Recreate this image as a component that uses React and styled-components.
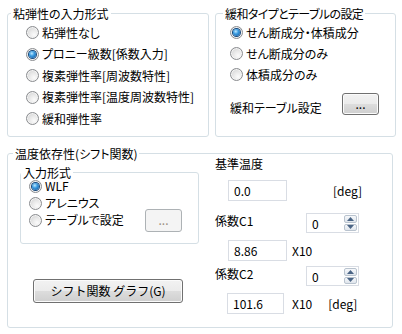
import React from "react";
import styled, { createGlobalStyle } from "styled-components";

const GlobalStyle = createGlobalStyle`
  html, body { margin: 0; padding: 0; background: #fff; }
  body {
    font-family: "Noto Sans CJK JP", "Noto Sans", sans-serif;
    font-size: 12px;
    color: #000;
    font-feature-settings: "palt";
  }
  * { box-sizing: border-box; }
`;

const Page = styled.div`
  width: 402px;
  height: 334px;
  padding: 5px 0 0 7px;
  overflow: hidden;
  background: #fff;
`;

const TopRow = styled.div`
  display: flex;
  gap: 6px;
  align-items: flex-start;
`;

const Group = styled.fieldset`
  margin: ${(p) => p.$mt || 0}px 0 0 0;
  padding: 0;
  min-width: 0;
  width: ${(p) => p.$w}px;
  height: ${(p) => p.$h}px;
  border: 1px solid #d5dfe5;
  border-radius: 3px;
`;

const Legend = styled.legend`
  margin-left: ${(p) => p.$offset}px;
  padding: 0 2px;
  line-height: ${(p) => p.$lh || 17}px;
  font-size: 12px;
  letter-spacing: ${(p) => p.$ls || 0}px;
`;

const RadioList = styled.div`
  display: flex;
  flex-direction: column;
  padding-left: ${(p) => p.$pl}px;
  margin-top: ${(p) => p.$mt || 0}px;
`;

const RadioRow = styled.div`
  display: flex;
  align-items: center;
  gap: 3px;
  height: ${(p) => p.$h}px;
  white-space: nowrap;
`;

const RadioText = styled.span`
  line-height: 14px;
`;

const RadioCircle = styled.span`
  flex: 0 0 13px;
  width: 13px;
  height: 13px;
  border-radius: 50%;
  border: 1px solid #8a8c8f;
  background: radial-gradient(circle at 65% 70%, #fbfbfb 0%, #e8e8e8 45%, #c9cacb 100%);
  box-shadow: inset 0 0 0 1px #f4f4f4;
  display: flex;
  align-items: center;
  justify-content: center;

  &::after {
    content: "";
    display: ${(p) => (p.$on ? "block" : "none")};
    width: 7px;
    height: 7px;
    border-radius: 50%;
    background: radial-gradient(circle at 40% 35%, #bfe9ff 0%, #3a9be0 40%, #0e4f95 100%);
    box-shadow: 0 0 0 1px #16487c;
  }
`;

const Radio = ({ label, on, h, children }) => (
  <RadioRow $h={h}>
    <RadioCircle $on={on} />
    <RadioText>{label}</RadioText>
    {children}
  </RadioRow>
);

const Button = styled.button`
  width: ${(p) => p.$w}px;
  height: ${(p) => p.$h}px;
  margin: 0;
  padding: 0;
  font-family: inherit;
  font-size: 12px;
  line-height: 16px;
  color: #000;
  border: 1px solid #707070;
  border-radius: 3px;
  background: linear-gradient(#f2f2f2 0%, #ebebeb 50%, #dddddd 50%, #cfcfcf 100%);
  box-shadow: inset 0 0 0 1px #fbfbfb;
  flex: 0 0 auto;

  &:disabled {
    border-color: #adb2b5;
    background: #f4f4f4;
    box-shadow: none;
    color: #9a8e80;
  }
`;

const SettingRow = styled.div`
  display: flex;
  align-items: flex-end;
  margin-top: 8px;
  line-height: 16px;
`;

const SettingLabel = styled.span`
  flex: 0 0 112px;
  margin-bottom: -1px;
`;

const BottomBody = styled.div`
  display: flex;
  align-items: flex-start;
`;

const LeftCol = styled.div`
  display: flex;
  flex-direction: column;
  align-items: flex-start;
  padding-left: 12px;
  width: 207px;
`;

const ButtonRowSpacer = styled.div`
  margin-left: auto;
  margin-right: 16px;
`;

const GraphButtonWrap = styled.div`
  margin: 35px 0 0 13px;
`;

const RightCol = styled.div`
  display: flex;
  flex-direction: column;
  margin-top: -6px;
  line-height: 16px;
`;

const Line = styled.div`
  display: flex;
  align-items: ${(p) => p.$align || "center"};
  margin-top: ${(p) => p.$mt || 0}px;
  white-space: nowrap;
`;

const Label = styled.span`
  flex: 0 0 ${(p) => p.$w || "auto"};
`;

const TextBox = styled.div`
  width: ${(p) => p.$w}px;
  height: 21px;
  margin-left: ${(p) => p.$ml || 0}px;
  border: 1px solid #d9dde4;
  padding-left: 5px;
  line-height: 19px;
  background: #fff;
`;

const Unit = styled.span`
  margin-left: ${(p) => p.$ml}px;
`;

const Spin = styled.div`
  width: 53px;
  height: 20px;
  border: 1px solid #d9dde4;
  display: flex;
  align-items: stretch;
  padding: 1px 1px 1px 0;
`;

const SpinValue = styled.span`
  flex: 1;
  padding-left: 5px;
  line-height: 17px;
`;

const SpinButtons = styled.div`
  width: 13px;
  display: flex;
  flex-direction: column;
  gap: 1px;
`;

const SpinBtn = styled.div`
  flex: 1;
  border: 1px solid #b9c3ce;
  border-radius: 2px;
  background: linear-gradient(#f6f8fb, #dfe5ec);
  display: flex;
  align-items: center;
  justify-content: center;
`;

const Arrow = ({ up }) => (
  <svg width="7" height="4" viewBox="0 0 7 4">
    <polygon points={up ? "0,4 7,4 3.5,0" : "0,0 7,0 3.5,4"} fill="#4a6485" />
  </svg>
);

const Spinner = ({ value }) => (
  <Spin>
    <SpinValue>{value}</SpinValue>
    <SpinButtons>
      <SpinBtn><Arrow up /></SpinBtn>
      <SpinBtn><Arrow /></SpinBtn>
    </SpinButtons>
  </Spin>
);

export default function App() {
  return (
    <>
      <GlobalStyle />
      <Page>
        <TopRow>
          <Group $w={202} $h={132}>
            <Legend $offset={3}>粘弾性の入力形式</Legend>
            <RadioList $pl={18}>
              <Radio h={21.5} label="粘弾性なし" />
              <Radio h={21.5} on label="プロニー級数[係数入力]" />
              <Radio h={21.5} label="複素弾性率[周波数特性]" />
              <Radio h={21.5} label="複素弾性率[温度周波数特性]" />
              <Radio h={21.5} label="緩和弾性率" />
            </RadioList>
          </Group>
          <Group $w={181} $h={132}>
            <Legend $offset={7} $ls={-0.6}>緩和タイプとテーブルの設定</Legend>
            <RadioList $pl={14}>
              <Radio h={21} on label="せん断成分・体積成分" />
              <Radio h={21} label="せん断成分のみ" />
              <Radio h={21} label="体積成分のみ" />
              <SettingRow>
                <SettingLabel>緩和テーブル設定</SettingLabel>
                <Button $w={37} $h={22}>...</Button>
              </SettingRow>
            </RadioList>
          </Group>
        </TopRow>
        <Group $w={386} $h={183} $mt={8}>
          <Legend $offset={5}>温度依存性(シフト関数)</Legend>
          <BottomBody>
            <LeftCol>
              <Group $w={179} $h={78} $mt={4}>
                <Legend $offset={0} $lh={13}>入力形式</Legend>
                <RadioList $pl={8} $mt={-1.5}>
                  <Radio h={17} on label="WLF" />
                  <Radio h={17} label="アレニウス" />
                  <Radio h={17} label="テーブルで設定">
                    <ButtonRowSpacer>
                      <Button $w={37} $h={23} disabled>...</Button>
                    </ButtonRowSpacer>
                  </Radio>
                </RadioList>
              </Group>
              <GraphButtonWrap>
                <Button $w={150} $h={24}>シフト関数 グラフ(G)</Button>
              </GraphButtonWrap>
            </LeftCol>
            <RightCol>
              <Line>基準温度</Line>
              <Line $mt={8}>
                <TextBox $w={59} $ml={13}>0.0</TextBox>
                <Unit $ml={46}>[deg]</Unit>
              </Line>
              <Line $mt={12} $align="flex-start">
                <Label $w="91px">係数C1</Label>
                <Spinner value="0" />
              </Line>
              <Line $mt={7}>
                <TextBox $w={59} $ml={13}>8.86</TextBox>
                <Unit $ml={5}>X10</Unit>
              </Line>
              <Line $mt={5} $align="flex-start">
                <Label $w="91px">係数C2</Label>
                <Spinner value="0" />
              </Line>
              <Line $mt={7}>
                <TextBox $w={57} $ml={12}>101.6</TextBox>
                <Unit $ml={8}>X10</Unit>
                <Unit $ml={16}>[deg]</Unit>
              </Line>
            </RightCol>
          </BottomBody>
        </Group>
      </Page>
    </>
  );
}
